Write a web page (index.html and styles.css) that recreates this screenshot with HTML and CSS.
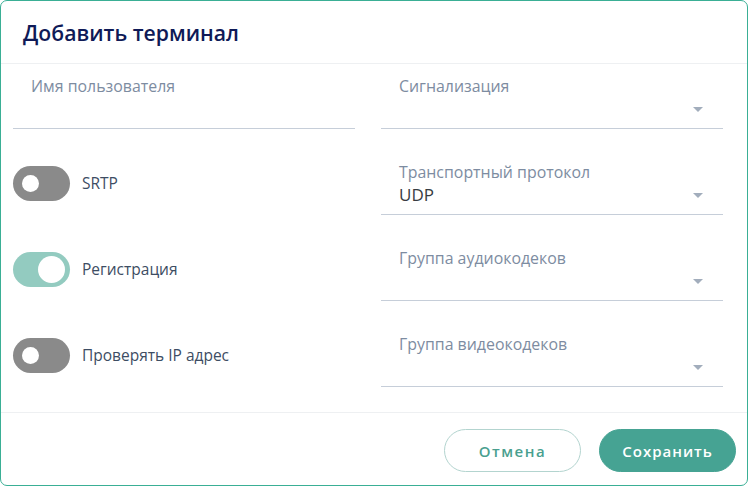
FILE: index.html
```html
<!DOCTYPE html>
<html lang="ru">
<head>
<meta charset="utf-8">
<title>Добавить терминал</title>
<link rel="stylesheet" href="styles.css">
</head>
<body>
<div class="dialog">
  <div class="dialog-header">
    <h1 class="dialog-title">Добавить терминал</h1>
  </div>
  <div class="dialog-body">
    <div class="field">
      <div class="field-label">Имя пользователя</div>
      <div class="field-value"></div>
    </div>
    <div class="field select">
      <div class="field-label">Сигнализация</div>
      <div class="field-value"></div>
      <span class="arrow"></span>
    </div>

    <div class="toggle-row">
      <span class="toggle"><span class="knob"></span></span>
      <span class="toggle-label">SRTP</span>
    </div>
    <div class="field select">
      <div class="field-label">Транспортный протокол</div>
      <div class="field-value">UDP</div>
      <span class="arrow"></span>
    </div>

    <div class="toggle-row">
      <span class="toggle on"><span class="knob"></span></span>
      <span class="toggle-label">Регистрация</span>
    </div>
    <div class="field select">
      <div class="field-label">Группа аудиокодеков</div>
      <div class="field-value"></div>
      <span class="arrow"></span>
    </div>

    <div class="toggle-row">
      <span class="toggle"><span class="knob"></span></span>
      <span class="toggle-label">Проверять IP адрес</span>
    </div>
    <div class="field select">
      <div class="field-label">Группа видеокодеков</div>
      <div class="field-value"></div>
      <span class="arrow"></span>
    </div>
  </div>
  <div class="dialog-footer">
    <button class="btn btn-outline">Отмена</button>
    <button class="btn btn-primary">Сохранить</button>
  </div>
</div>
</body>
</html>
```

FILE: styles.css
```css
html, body {
  margin: 0;
  padding: 0;
  background: #ffffff;
}
body {
  font-family: "Open Sans", "Noto Sans", "Liberation Sans", sans-serif;
  width: 748px;
  height: 486px;
  overflow: hidden;
}
.dialog {
  box-sizing: border-box;
  width: 748px;
  height: 486px;
  border: 1px solid #3aaf95;
  border-radius: 7px;
  background: #fff;
  display: flex;
  flex-direction: column;
}
.dialog-header {
  height: 62px;
  border-bottom: 1px solid #eef0f2;
  display: flex;
  align-items: center;
  padding-left: 22px;
}
.dialog-title {
  margin: 0;
  font-size: 21.2px;
  font-weight: 600;
  color: #0f1a57;
}
.dialog-body {
  display: grid;
  grid-template-columns: 342px 342px;
  grid-auto-rows: 64px;
  column-gap: 26px;
  row-gap: 22px;
  padding: 1px 0 25px 12px;
  border-bottom: 1px solid #eef0f2;
}
.field {
  position: relative;
  box-sizing: border-box;
  border-bottom: 1px solid #c6ced9;
  padding: 11px 0 0 18px;
}
.field-label {
  font-size: 15.9px;
  line-height: 20px;
  color: #7d8ca1;
}
.field-value {
  font-size: 17px;
  line-height: 26px;
  color: #383c42;
  height: 26px;
}
.arrow {
  position: absolute;
  right: 20px;
  top: 42px;
  width: 0;
  height: 0;
  border-left: 5.5px solid transparent;
  border-right: 5.5px solid transparent;
  border-top: 5.5px solid #a2adbc;
}
.toggle-row {
  display: flex;
  align-items: center;
  gap: 12px;
}
.toggle {
  position: relative;
  width: 57px;
  height: 35px;
  border-radius: 18px;
  background: #8a8a8a;
  flex: none;
}
.toggle .knob {
  position: absolute;
  left: 9px;
  top: 9px;
  width: 17px;
  height: 17px;
  border-radius: 50%;
  background: #fff;
}
.toggle.on {
  background: #93cbc0;
}
.toggle.on .knob {
  left: 25px;
  top: 4px;
  width: 27px;
  height: 27px;
}
.toggle-label {
  font-size: 15.5px;
  color: #3d4d63;
}
.dialog-footer {
  flex: 1;
  display: flex;
  justify-content: flex-end;
  align-items: flex-start;
  gap: 18px;
  padding: 16px 11px 0 0;
}
.btn {
  box-sizing: border-box;
  width: 137px;
  height: 43px;
  border-radius: 22px;
  font-family: "Open Sans", "Noto Sans", sans-serif;
  font-size: 15px;
  font-weight: 600;
  letter-spacing: 1.5px;
  cursor: pointer;
}
.btn-outline {
  background: #fff;
  border: 1px solid #b3d4cf;
  color: #4a9f8f;
}
.btn-primary {
  background: #46a393;
  border: 1px solid #46a393;
  color: #fff;
  letter-spacing: 1px;
}
```
